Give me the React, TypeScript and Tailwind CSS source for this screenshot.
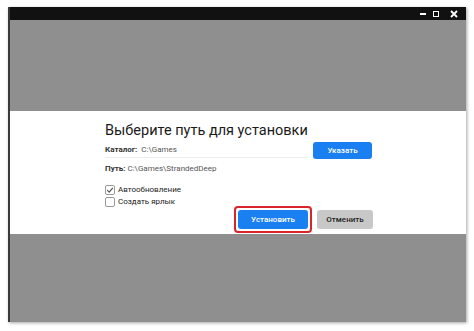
export default function App() {
  return (
    <div className="w-[474px] h-[331px] bg-white relative overflow-hidden" style={{ fontFamily: 'Roboto, "Noto Sans", sans-serif' }}>
      <div className="absolute left-[8px] top-[7px] w-[458px] h-[315px] flex flex-col bg-[#8f8f8f] border-l-2 border-[#3a3a3a] shadow-[1px_1px_3px_rgba(0,0,0,0.35)]">
        <div className="h-[13px] bg-[#111111] flex items-center justify-end pr-[8px] gap-[7px] shrink-0">
          <div className="w-[6px] h-[2px] bg-white" />
          <div className="w-[6px] h-[6px] border border-white" />
          <svg width="8" height="8" viewBox="0 0 8 8" className="ml-[4px]">
            <path d="M1 1L7 7M7 1L1 7" stroke="white" strokeWidth="1.8" />
          </svg>
        </div>
        <div className="h-[91px] shrink-0" />
        <div className="h-[123px] bg-white shrink-0 pl-[95px] pt-[11px]">
          <div className="text-[14.5px] leading-[18px] text-[#1a1a1a]">Выберите путь для установки</div>
          <div className="flex items-center mt-[2px]">
            <div className="w-[203px] h-[14px] border-b border-[#eeeeee] flex items-center text-[8px] text-[#555]">
              <span className="font-bold text-[#333]">Каталог:</span>
              <span className="ml-[4px]">C:\Games</span>
            </div>
            <div className="ml-[5px] w-[59px] h-[17px] rounded-[3px] bg-[#1a7ff0] text-white text-[8px] font-medium flex items-center justify-center">Указать</div>
          </div>
          <div className="text-[8px] leading-[10px] text-[#555] mt-[5px]">
            <span className="font-bold text-[#333]">Путь:</span> C:\Games\StrandedDeep
          </div>
          <div className="mt-[11px] flex items-center text-[8px] leading-[10px] text-[#222]">
            <svg width="10" height="10" viewBox="0 0 10 10">
              <rect x="0.5" y="0.5" width="9" height="9" rx="1.5" fill="white" stroke="#999" />
              <path d="M2.2 5.2L4.2 7.2L7.8 2.8" stroke="#555" strokeWidth="1.2" fill="none" />
            </svg>
            <span className="ml-[3px]">Автообновление</span>
          </div>
          <div className="mt-[2px] flex items-center text-[8px] leading-[10px] text-[#222]">
            <svg width="10" height="10" viewBox="0 0 10 10">
              <rect x="0.5" y="0.5" width="9" height="9" rx="1.5" fill="white" stroke="#999" />
            </svg>
            <span className="ml-[3px]">Создать ярлык</span>
          </div>
          <div className="flex justify-end items-center w-[268px] -mt-[1px] gap-[5px]">
            <div className="rounded-[4px] border-2 border-[#d9232d] p-[2px]">
              <div className="w-[70px] h-[19px] rounded-[3px] bg-[#1a7ff0] text-white text-[8px] font-medium flex items-center justify-center">Установить</div>
            </div>
            <div className="w-[56px] h-[19px] rounded-[3px] bg-[#c8c8c8] text-[#222] text-[8px] font-medium flex items-center justify-center">Отменить</div>
          </div>
        </div>
      </div>
    </div>
  );
}
